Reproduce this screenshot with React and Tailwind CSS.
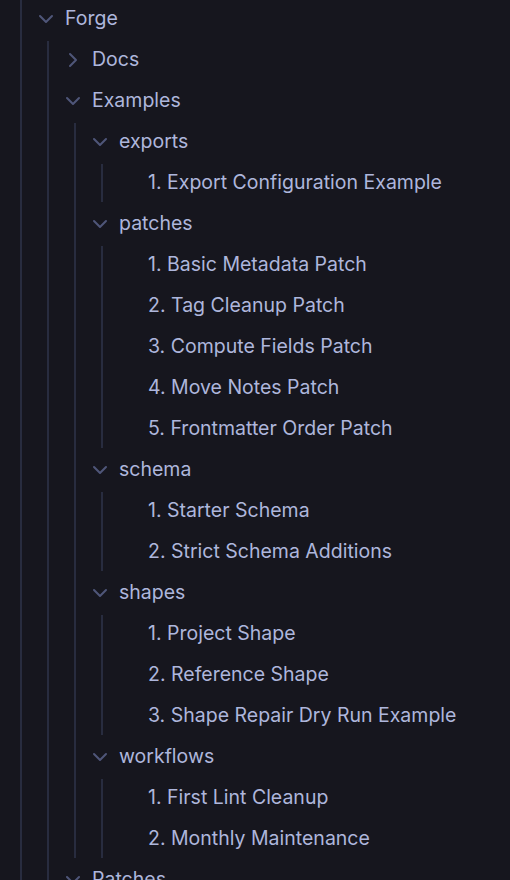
import { ChevronDown, ChevronRight } from "lucide-react";

const tree = [
  {
    name: "Forge",
    open: true,
    children: [
      { name: "Docs", open: false, children: [] },
      {
        name: "Examples",
        open: true,
        children: [
          { name: "exports", open: true, children: ["1. Export Configuration Example"] },
          {
            name: "patches",
            open: true,
            children: [
              "1. Basic Metadata Patch",
              "2. Tag Cleanup Patch",
              "3. Compute Fields Patch",
              "4. Move Notes Patch",
              "5. Frontmatter Order Patch",
            ],
          },
          { name: "schema", open: true, children: ["1. Starter Schema", "2. Strict Schema Additions"] },
          {
            name: "shapes",
            open: true,
            children: ["1. Project Shape", "2. Reference Shape", "3. Shape Repair Dry Run Example"],
          },
          { name: "workflows", open: true, children: ["1. First Lint Cleanup", "2. Monthly Maintenance"] },
        ],
      },
      { name: "Patches", open: true, children: [] },
    ],
  },
];

function Node({ node }) {
  // leaf rows keep an empty chevron slot so they line up under their folder's text
  if (typeof node === "string") {
    return (
      <div className="flex items-center h-[38px] mt-[3px] gap-[7px] whitespace-nowrap">
        <span className="w-[26px] shrink-0" />
        <span>{node}</span>
      </div>
    );
  }

  const Icon = node.open ? ChevronDown : ChevronRight;

  return (
    <div>
      <div className="flex items-center h-[38px] mt-[3px] gap-[7px] whitespace-nowrap">
        <Icon size={24} strokeWidth={2} className="text-[#4f5679] shrink-0" />
        <span>{node.name}</span>
      </div>
      {node.open && node.children.length > 0 && (
        <div className="ml-[13px] border-l-2 border-[#282c3f] pl-[12px]">
          {node.children.map((child, i) => (
            <Node key={i} node={child} />
          ))}
        </div>
      )}
    </div>
  );
}

export default function App() {
  return (
    <div
      className="h-[880px] w-full overflow-hidden bg-[#16161e] text-[#aeb6dc] text-[19.5px]"
      style={{ fontFamily: "Inter, 'Noto Sans', sans-serif" }}
    >
      <div className="ml-[20px] -mt-[3px] border-l-2 border-[#282c3f] pl-[12px] min-h-[900px]">
        {tree.map((node, i) => (
          <Node key={i} node={node} />
        ))}
      </div>
    </div>
  );
}
